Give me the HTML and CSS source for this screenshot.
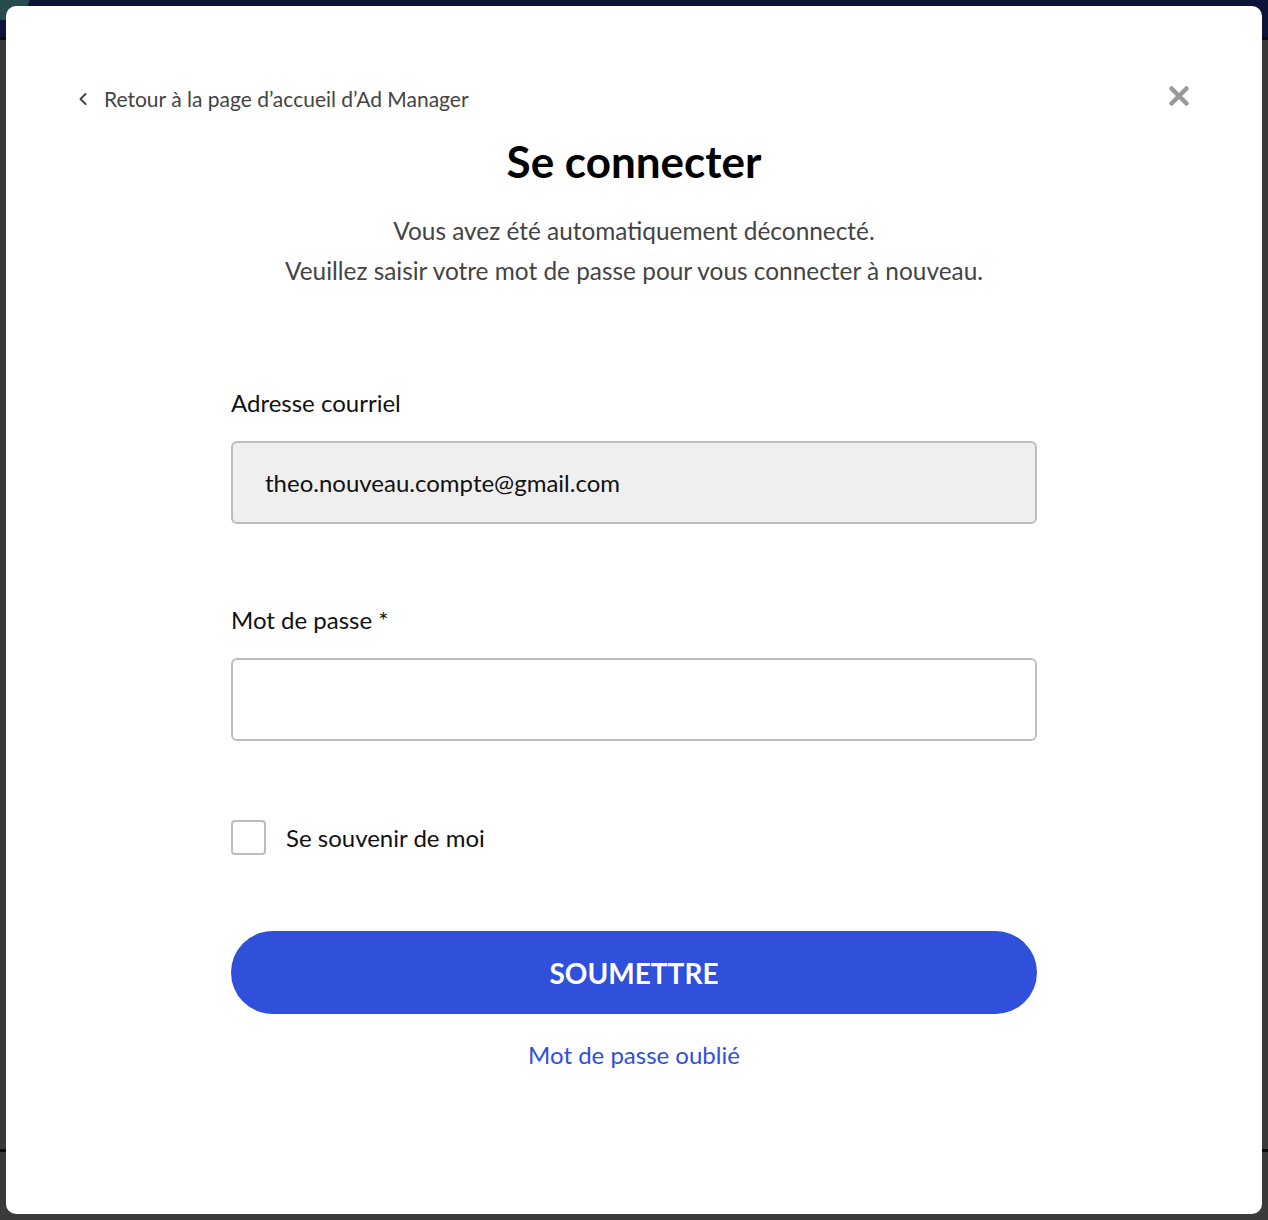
FILE: index.html
```html
<!DOCTYPE html>
<html lang="fr">
<head>
  <meta charset="UTF-8" />
  <meta name="viewport" content="width=device-width, initial-scale=1.0"/>
  <title>Se connecter - Ad Manager</title>
  <link rel="stylesheet" href="styles.css">
</head>
<body>

  <!-- Page behind the overlay -->
  <div class="backdrop">
    <div class="topbar"><span class="topbar-blob"></span></div>
    <div class="backdrop-line"></div>
  </div>

  <!-- Login modal -->
  <div class="modal">
    <div class="modal-head">
      <a href="#" class="back-link">
        <svg class="chevron" viewBox="0 0 10 14" width="10" height="14">
          <path d="M7.5 2 L2.5 7 L7.5 12" fill="none" stroke="#444" stroke-width="2" stroke-linecap="round" stroke-linejoin="round"/>
        </svg>
        Retour à la page d’accueil d’Ad Manager
      </a>
      <button class="close-btn" aria-label="Fermer">
        <svg viewBox="0 0 22 22" width="22" height="22">
          <path d="M3.5 3.5 L18.5 18.5 M18.5 3.5 L3.5 18.5" stroke="#999" stroke-width="4.5" stroke-linecap="round"/>
        </svg>
      </button>
    </div>

    <h1>Se connecter</h1>
    <p class="intro">Vous avez été automatiquement déconnecté.<br>Veuillez saisir votre mot de passe pour vous connecter à nouveau.</p>

    <form class="login-form" onsubmit="return false;">
      <label class="field-label" for="email">Adresse courriel</label>
      <input type="email" id="email" class="field readonly" value="theo.nouveau.compte@gmail.com" readonly>

      <label class="field-label" for="password">Mot de passe *</label>
      <input type="password" id="password" class="field">

      <label class="remember">
        <input type="checkbox">
        <span class="box"></span>
        Se souvenir de moi
      </label>

      <button type="submit" class="submit-btn">SOUMETTRE</button>
      <a href="#" class="forgot">Mot de passe oublié</a>
    </form>
  </div>

</body>
</html>
```

FILE: styles.css
```css
* {
  box-sizing: border-box;
}
body {
  margin: 0;
  font-family: Lato, "Noto Sans", sans-serif;
  background: #3a3a3a;
  min-height: 100vh;
  overflow: hidden;
}
/* Dimmed page behind */
.backdrop {
  position: fixed;
  inset: 0;
  z-index: 0;
}
.topbar {
  height: 40px;
  background: #0e1438;
  border-bottom: 3px solid #0a0a0a;
  position: relative;
  overflow: hidden;
}
.topbar-blob {
  position: absolute;
  left: -20px;
  top: -30px;
  width: 50px;
  height: 50px;
  border-radius: 50%;
  background: #274b4f;
}
.backdrop-line {
  position: absolute;
  left: 0;
  right: 0;
  top: 1149px;
  height: 3px;
  background: #0a0a0a;
}
/* Modal card */
.modal {
  position: relative;
  z-index: 1;
  margin: 6px;
  height: 1208px;
  background: #fff;
  border-radius: 10px;
  padding: 0 72px;
  display: flex;
  flex-direction: column;
  align-items: center;
}
.modal-head {
  width: 100%;
  display: flex;
  justify-content: space-between;
  align-items: center;
  padding-top: 80px;
}
.back-link {
  display: flex;
  align-items: center;
  gap: 16px;
  color: #444;
  text-decoration: none;
  font-size: 21px;
}
.close-btn {
  border: none;
  background: none;
  padding: 0;
  margin: -5px 0 0 0;
  cursor: pointer;
  display: flex;
}
h1 {
  margin: 22px 0 0;
  font-size: 44px;
  font-weight: 700;
  color: #000;
  line-height: 56px;
}
.intro {
  margin: 22px 0 0;
  text-align: center;
  color: #444;
  font-size: 24.4px;
  line-height: 40px;
}
.login-form {
  width: 806px;
  display: flex;
  flex-direction: column;
  margin-top: 96px;
}
.field-label {
  font-size: 24px;
  color: #111;
  line-height: 32px;
}
.field {
  height: 83px;
  margin: 22px 0 80px;
  padding: 0 32px;
  border: 2px solid #bdbdbd;
  border-radius: 6px;
  font-family: inherit;
  font-size: 24px;
  color: #111;
  background: #fff;
}
.field.readonly {
  background: #efefef;
}
.field:focus {
  outline: none;
  border-color: #304fdb;
}
.remember {
  display: flex;
  align-items: center;
  gap: 20px;
  font-size: 24px;
  color: #111;
  margin-top: -1px;
}
.remember input {
  display: none;
}
.box {
  width: 35px;
  height: 35px;
  border: 2px solid #bdbdbd;
  border-radius: 4px;
}
.submit-btn {
  margin-top: 76px;
  height: 83px;
  border: none;
  border-radius: 42px;
  background: #304fdb;
  color: #fff;
  font-family: inherit;
  font-size: 28px;
  font-weight: 700;
  cursor: pointer;
}
.submit-btn:hover {
  background: #2642c4;
}
.forgot {
  margin-top: 26px;
  align-self: center;
  color: #304fdb;
  font-size: 24px;
  text-decoration: none;
}
.forgot:hover {
  text-decoration: underline;
}
```
